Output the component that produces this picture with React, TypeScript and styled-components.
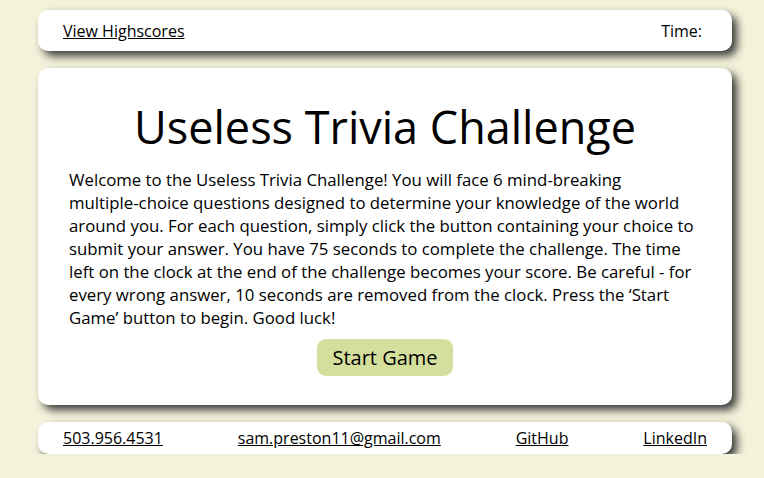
import React from "react";
import styled, { createGlobalStyle } from "styled-components";

const Global = createGlobalStyle`
  html, body { margin: 0; padding: 0; }
  body {
    background: #f3f2da;
    font-family: "Open Sans", sans-serif;
    color: #000;
  }
`;

const Page = styled.div`
  display: flex;
  flex-direction: column;
  gap: 17px;
  padding: 10px 32px 0 38px;
`;

const Card = styled.div`
  background: #fff;
  border-radius: 10px;
  box-shadow: 5px 5px 8px #3a3a3a;
`;

const Bar = styled(Card)<{ $h: number; $pr: number }>`
  height: ${(p) => p.$h}px;
  display: flex;
  align-items: center;
  justify-content: space-between;
  padding: 0 ${(p) => p.$pr}px 0 25px;
  box-sizing: border-box;
  font-size: 16px;
`;

const Link = styled.a`
  color: #000;
  text-decoration: underline;
  cursor: pointer;
`;

const Main = styled(Card)`
  height: 337px;
  box-sizing: border-box;
  padding: 33px 28px 0;
  display: flex;
  flex-direction: column;
  align-items: center;
`;

const Title = styled.h1`
  margin: 0;
  font-size: 45px;
  font-weight: 400;
  line-height: 52px;
  text-align: center;
`;

const Intro = styled.p`
  margin: 15px 0 0;
  padding-left: 3px;
  font-size: 16.8px;
  line-height: 23px;
  align-self: stretch;
`;

const NoBreak = styled.span`
  white-space: nowrap;
`;

const StartButton = styled.button`
  margin-top: 10px;
  background: #d5df9d;
  border: none;
  border-radius: 9px;
  font-family: "Open Sans", sans-serif;
  font-size: 20px;
  color: #000;
  padding: 0 15px;
  height: 37px;
  cursor: pointer;
`;

export default function App() {
  return (
    <>
      <Global />
      <Page>
        <Bar $h={41} $pr={30}>
          <Link>View Highscores</Link>
          <span>Time: </span>
        </Bar>
        <Main>
          <Title>Useless Trivia Challenge</Title>
          <Intro>
            Welcome to the Useless Trivia Challenge! You will face 6 mind-breaking{" "}
            <NoBreak>multiple-choice</NoBreak> questions designed to determine your knowledge of the world
            around you. For each question, simply click the button containing your choice to
            submit your answer. You have 75 seconds to complete the challenge. The time
            left on the clock at the end of the challenge becomes your score. Be careful - for
            every wrong answer, 10 seconds are removed from the clock. Press the ‘Start
            Game’ button to begin. Good luck!
          </Intro>
          <StartButton>Start Game</StartButton>
        </Main>
        <Bar $h={32} $pr={25}>
          <Link>503.956.4531</Link>
          <Link>sam.preston11@gmail.com</Link>
          <Link>GitHub</Link>
          <Link>LinkedIn</Link>
        </Bar>
      </Page>
    </>
  );
}
